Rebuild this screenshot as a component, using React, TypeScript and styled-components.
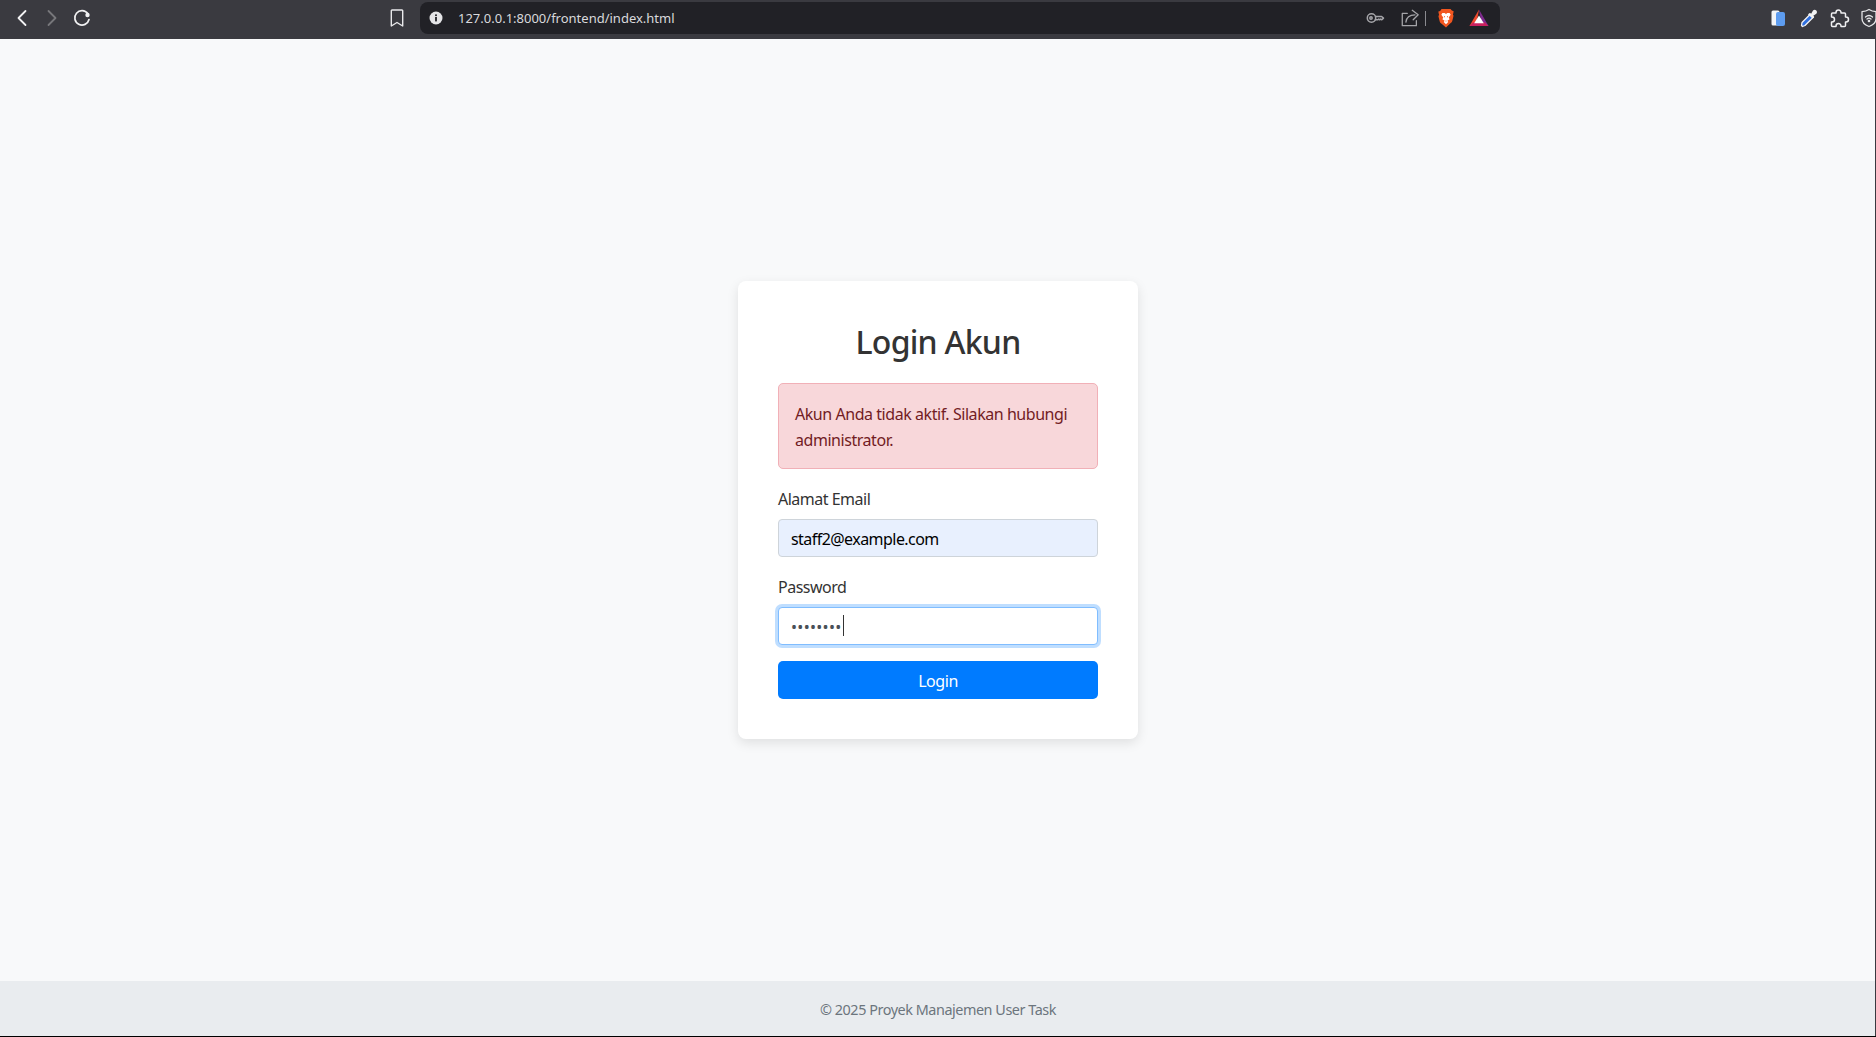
import React from 'react';
import styled, { createGlobalStyle } from 'styled-components';

const GlobalStyle = createGlobalStyle`
  html, body, #root {
    height: 100%;
    margin: 0;
  }
  body {
    background: #f8f9fa;
    font-family: 'Noto Sans', 'Open Sans', sans-serif;
    overflow: hidden;
  }
  * {
    box-sizing: border-box;
  }
`;

const Page = styled.div`
  height: 100vh;
  display: flex;
  flex-direction: column;
  border-bottom: 1px solid #000;
`;

const BrowserBar = styled.header`
  height: 39px;
  flex: none;
  display: flex;
  align-items: flex-start;
  background: #3a3a40;
  padding-left: 11px;
  overflow: hidden;
`;

const NavGroup = styled.div`
  display: flex;
  align-items: center;
  flex: none;
  height: 36px;
  gap: 8px;
`;

const IconSlot = styled.span<{ $w?: number }>`
  width: ${({ $w }) => $w ?? 22}px;
  height: 22px;
  display: flex;
  align-items: center;
  justify-content: center;
  flex: none;
`;

const BookmarkSlot = styled(IconSlot)`
  margin-left: 293px;
  margin-right: 12px;
`;

const ShareSlot = styled(IconSlot)`
  margin-left: 10px;
`;

const BraveSlot = styled(IconSlot)`
  margin-right: 7px;
`;

const AddressPill = styled.div`
  width: 1080px;
  height: 32px;
  flex: none;
  margin-top: 2px;
  background: #212126;
  border-radius: 8px;
  display: flex;
  align-items: center;
  padding: 0 7px 0 5px;
  color: #d9d9dc;
  font-size: 13px;
`;

const UrlText = styled.span`
  margin-left: 11px;
  flex: 1;
`;

const Separator = styled.span`
  width: 1px;
  height: 15px;
  background: #8b8b90;
  margin: 0 8px 0 1px;
`;

const ExtensionGroup = styled.div`
  display: flex;
  align-items: center;
  flex: none;
  height: 36px;
  gap: 8px;
  margin-left: 268px;
`;

const Main = styled.main`
  flex: 1;
  display: flex;
  align-items: center;
  justify-content: center;
  box-shadow: inset -1px 0 0 #3a3a40;
`;

const Card = styled.form`
  width: 400px;
  padding: 40px;
  background: #fff;
  border-radius: 8px;
  box-shadow: 0 4px 12px rgba(0, 0, 0, 0.1);
`;

const Title = styled.h2`
  margin: 0 0 22px;
  padding-top: 2px;
  text-align: center;
  font-size: 32px;
  line-height: 38.4px;
  font-weight: 550;
  color: #333;
  letter-spacing: -0.75px;
`;

const Alert = styled.div`
  padding: 17px 16px 15px;
  margin-bottom: 16px;
  background: #f8d7da;
  border: 1px solid #f1b0b7;
  border-radius: 5px;
  color: #721c24;
  font-size: 16px;
  line-height: 26px;
  letter-spacing: -0.45px;
`;

const Field = styled.div`
  margin-bottom: 16px;
`;

const Label = styled.label`
  display: block;
  margin-bottom: 7px;
  padding-top: 1px;
  font-size: 16px;
  line-height: 26px;
  color: #333;
  letter-spacing: -0.5px;
`;

const InputWrap = styled.div`
  position: relative;
`;

const Input = styled.input<{ $focused?: boolean }>`
  display: block;
  width: 100%;
  height: 38px;
  padding: 7px 12px 5px;
  font-family: inherit;
  font-size: 16px;
  color: ${({ $focused }) => ($focused ? '#495057' : '#000')};
  background: ${({ $focused }) => ($focused ? '#fff' : '#e8f0fe')};
  border: 1px solid ${({ $focused }) => ($focused ? '#80bdff' : '#ced4da')};
  border-radius: 4px;
  outline: none;
  letter-spacing: ${({ $focused }) => ($focused ? '0.3px' : '-0.55px')};
  box-shadow: ${({ $focused }) => ($focused ? '0 0 0 3px rgba(0, 123, 255, 0.25)' : 'none')};
`;

const Caret = styled.span`
  position: absolute;
  left: 65px;
  top: 8px;
  width: 1px;
  height: 21px;
  background: #333;
`;

const SubmitButton = styled.button`
  display: block;
  width: 100%;
  height: 38px;
  padding: 2px 0 0;
  border: none;
  border-radius: 5px;
  background: #007bff;
  color: #fff;
  font-family: inherit;
  font-size: 16px;
  letter-spacing: -0.45px;
`;

const Footer = styled.footer`
  height: 55px;
  flex: none;
  display: flex;
  align-items: center;
  justify-content: center;
  padding-top: 2px;
  background: #e9ecef;
  color: #6c757d;
  font-size: 14.4px;
  letter-spacing: -0.45px;
  box-shadow: inset -1px 0 0 #3a3a40;
`;

const stroke = { fill: 'none', strokeLinecap: 'round', strokeLinejoin: 'round' } as const;

const App: React.FC = () => (
  <Page>
    <GlobalStyle />
    <BrowserBar>
      <NavGroup>
        <IconSlot>
          <svg width="22" height="22" viewBox="0 0 22 22" {...stroke} stroke="#f2f2f3" strokeWidth="1.8">
            <path d="M14.5 4 7.5 11l7 7" />
          </svg>
        </IconSlot>
        <IconSlot>
          <svg width="22" height="22" viewBox="0 0 22 22" {...stroke} stroke="#77777b" strokeWidth="1.8">
            <path d="M7.5 4l7 7-7 7" />
          </svg>
        </IconSlot>
        <IconSlot>
          <svg width="22" height="22" viewBox="0 0 22 22" {...stroke} stroke="#f2f2f3" strokeWidth="1.7">
            <path d="M16.8 6.6A7.2 7.2 0 1 0 18 12.5" />
            <circle cx="16.5" cy="8" r="2.2" fill="#f2f2f3" stroke="none" />
          </svg>
        </IconSlot>
      </NavGroup>
      <NavGroup>
        <BookmarkSlot>
          <svg width="22" height="22" viewBox="0 0 22 22" {...stroke} stroke="#e9e9eb" strokeWidth="1.4">
            <path d="M6 3h10a.7.7 0 0 1 .7.7V19L11 15.5 5.3 19V3.7A.7.7 0 0 1 6 3z" />
          </svg>
        </BookmarkSlot>
      </NavGroup>
      <AddressPill>
        <IconSlot>
          <svg width="22" height="22" viewBox="0 0 22 22">
            <circle cx="11" cy="11" r="6.5" fill="#e4e4e6" />
            <rect x="10.1" y="10" width="1.8" height="4.4" fill="#212126" />
            <rect x="10.1" y="7.4" width="1.8" height="1.7" fill="#212126" />
          </svg>
        </IconSlot>
        <UrlText>127.0.0.1:8000/frontend/index.html</UrlText>
        <IconSlot>
          <svg width="22" height="22" viewBox="0 0 22 22" {...stroke} stroke="#a5a5a9" strokeWidth="1.5">
            <circle cx="7.5" cy="11" r="4.2" />
            <circle cx="7" cy="11" r="1.2" />
            <path d="M11.6 9.5h6l1.9 1.6-1.7 1.7-1.1-.8-1 .8-1-.8-1 .8h-2.4" />
          </svg>
        </IconSlot>
        <ShareSlot $w={28}>
          <svg width="20" height="20" viewBox="0 0 22 22" {...stroke} stroke="#a5a5a9" strokeWidth="1.4">
            <path d="M8 6H2.5v13.5H18V14" />
            <path d="M6.5 15.5c.5-5 4-8 10-8" />
            <path d="M13.5 2.5l6.5 5-5.500 5.500" />
          </svg>
        </ShareSlot>
        <Separator />
        <BraveSlot $w={24}>
          <svg width="18" height="20" viewBox="0 0 20 22">
            <path d="M5 1h10l1.5 1.7 2 .7-.4 2.2-.4 1.4.7 1.6-1.3 5.2c-.4 1.6-1.1 2.3-2.2 3L10 21.5l-4.9-4.2c-1.1-.7-1.8-1.4-2.2-3L1.6 9.1l.7-1.6-.4-1.4-.4-2.2 2-.7z" fill="#f1561f" />
            <path d="M6 5.5h2.5l1.5 1 1.5-1H14l1.2 2L13 10.5l1 2-2.5 1.5 1 1.5L10 18l-2.5-2.5 1-1.5L6 12.5l1-2-2.2-3z" fill="#fff" />
            <path d="M7.5 8.5l1.500.8-.6 1.500zM12.500 8.500l-1.500.8.6 1.500zM9 14h2l-1 1.200z" fill="#f1561f" />
          </svg>
        </BraveSlot>
        <IconSlot $w={28}>
          <svg width="22" height="20" viewBox="0 0 22 20">
            <path d="M11 1.500 1.500 18h6.500z" fill="#f0492e" />
            <path d="M11 1.500 20.500 18H14z" fill="#7e2a8e" />
            <path d="M1.500 18h19l-3.500-3.500H5z" fill="#c9205f" />
            <path d="M11 7.500l4.800 7.700H6.200z" fill="#fff" />
          </svg>
        </IconSlot>
      </AddressPill>
      <ExtensionGroup>
        <IconSlot>
          <svg width="22" height="22" viewBox="0 0 22 22">
            <rect x="3.5" y="3.5" width="8" height="15" rx="1.5" fill="#f2f4f7" />
            <rect x="8" y="5" width="9" height="14" rx="2" fill="#5d9cf0" />
          </svg>
        </IconSlot>
        <IconSlot>
          <svg width="22" height="22" viewBox="0 0 22 22" {...stroke}>
            <path d="M4.5 19.5l-1-1 .5-3L12.5 7l3 3-8.5 8.500z" fill="#2f6fe0" stroke="#f2f2f3" strokeWidth="1.3" />
            <path d="M11.5 6l1.500 1 2-3.500c1-1 2.500-.8 3.300 0s1 2.300 0 3.300L15 9l1 1.500-1.500 1L10 7.500z" fill="#f2f2f3" />
          </svg>
        </IconSlot>
        <IconSlot>
          <svg width="22" height="22" viewBox="0 0 22 22" {...stroke} stroke="#f0f0f1" strokeWidth="1.5">
            <path d="M8 5.500a2.500 2.500 0 0 1 5 0V6h3.500a1 1 0 0 1 1 1v3H18a2.500 2.500 0 0 1 0 5h-.5v3.500a1 1 0 0 1-1 1H13V19a2.500 2.500 0 0 0-5 0v.5H4.500a1 1 0 0 1-1-1V15H4a2.500 2.500 0 0 0 0-5h-.5V7a1 1 0 0 1 1-1H8z" />
          </svg>
        </IconSlot>
        <IconSlot>
          <svg width="22" height="22" viewBox="0 0 22 22" {...stroke} stroke="#e4e4e6" strokeWidth="1.3">
            <path d="M11 2.500c2.500 1.600 4.500 2 7 2.200v6.800c0 3.800-3 6.500-7 8-4-1.500-7-4.200-7-8V4.700c2.500-.2 4.500-.6 7-2.200z" />
            <path d="M7.500 10c2-1.700 5-1.700 7 0M9 12c1.100-.9 2.900-.9 4 0" />
            <circle cx="11" cy="14" r=".7" fill="#e4e4e6" />
          </svg>
        </IconSlot>
      </ExtensionGroup>
    </BrowserBar>
    <Main>
      <Card>
        <Title>Login Akun</Title>
        <Alert>Akun Anda tidak aktif. Silakan hubungi administrator.</Alert>
        <Field>
          <Label>Alamat Email</Label>
          <Input type="email" value="staff2@example.com" readOnly />
        </Field>
        <Field>
          <Label>Password</Label>
          <InputWrap>
            <Input type="password" value="password" readOnly $focused />
            <Caret />
          </InputWrap>
        </Field>
        <SubmitButton type="button">Login</SubmitButton>
      </Card>
    </Main>
    <Footer>© 2025 Proyek Manajemen User Task</Footer>
  </Page>
);

export default App;
